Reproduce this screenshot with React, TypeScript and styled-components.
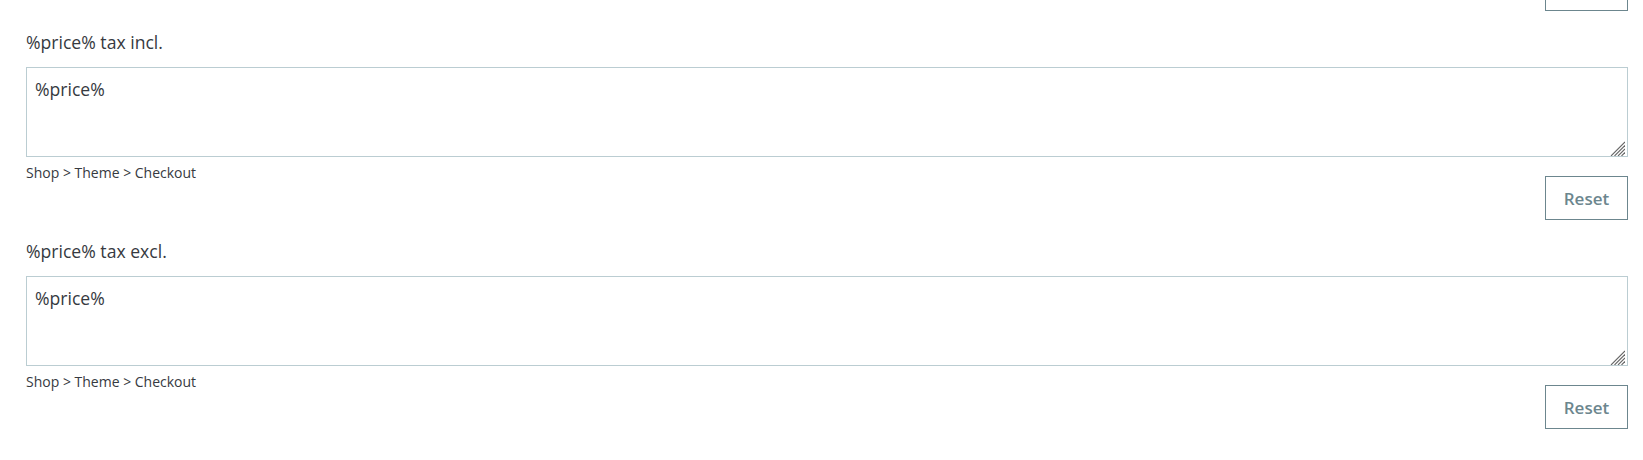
import React, { FC } from "react";
import styled, { createGlobalStyle } from "styled-components";

const GlobalStyle = createGlobalStyle`
  html, body {
    margin: 0;
    padding: 0;
    background: #ffffff;
  }
  body {
    font-family: "Open Sans", "Liberation Sans", sans-serif;
    color: #363a41;
  }
`;

type FieldProps = {
  label: string;
  value: string;
  help: string;
};

const Grip: FC = () => (
  <GripIcon width="15" height="15" viewBox="0 0 15 15" aria-hidden="true">
    <g stroke="#666666" strokeWidth="1.1">
      <line x1="1" y1="15" x2="15" y2="1" />
      <line x1="4.5" y1="15" x2="15" y2="4.5" />
      <line x1="8" y1="15" x2="15" y2="8" />
      <line x1="11.5" y1="15" x2="15" y2="11.5" />
    </g>
  </GripIcon>
);

const Field: FC<FieldProps> = ({ label, value, help }) => {
  return (
    <FormGroup>
      <Label>{label}</Label>
      <AreaWrap>
        <TextArea defaultValue={value} />
        <Grip />
      </AreaWrap>
      <Help>{help}</Help>
      <ButtonRow>
        <ResetButton type="button">Reset</ResetButton>
      </ButtonRow>
    </FormGroup>
  );
};

export default function App() {
  return (
    <>
      <GlobalStyle />
      <Page>
        <ButtonRow cut>
          <ResetButton type="button">Reset</ResetButton>
        </ButtonRow>
        <Field
          label="%price% tax incl."
          value="%price%"
          help="Shop > Theme > Checkout"
        />
        <Field
          label="%price% tax excl."
          value="%price%"
          help="Shop > Theme > Checkout"
        />
      </Page>
    </>
  );
}

const Page = styled.div`
  box-sizing: border-box;
  width: 100%;
  height: 460px;
  overflow: hidden;
  padding: 0 15px 0 26px;
`;

const FormGroup = styled.div`
  display: flex;
  flex-direction: column;
  padding-top: 19px;
`;

const Label = styled.label`
  font-size: 17.6px;
  line-height: 25px;
  color: #363a41;
  margin-bottom: 12px;
`;

const AreaWrap = styled.div`
  position: relative;
  height: 90px;
`;

const TextArea = styled.textarea`
  box-sizing: border-box;
  display: block;
  width: 100%;
  height: 90px;
  margin: 0;
  padding: 9px 8px 6px;
  border: 1px solid #bbcdd2;
  border-radius: 0;
  resize: none;
  font-family: "Open Sans", "Liberation Sans", sans-serif;
  font-size: 17.6px;
  line-height: 25px;
  color: #363a41;
  background: #ffffff;
  outline: none;
`;

const GripIcon = styled.svg`
  position: absolute;
  right: 3px;
  bottom: 1px;
  pointer-events: none;
`;

const Help = styled.div`
  height: 13px;
  padding-top: 6px;
  font-size: 14px;
  line-height: 19px;
  color: #363a41;
  white-space: nowrap;
`;

const ButtonRow = styled.div<{ cut?: boolean }>`
  display: flex;
  justify-content: flex-end;
  margin-top: ${({ cut }) => (cut ? "-33px" : "0")};
`;

const ResetButton = styled.button`
  box-sizing: border-box;
  height: 44px;
  width: 83px;
  padding: 0;
  border: 1px solid #6c868e;
  border-radius: 0;
  background: #ffffff;
  color: #6c868e;
  font-family: "Open Sans", "Liberation Sans", sans-serif;
  font-size: 17px;
  font-weight: 600;
  cursor: pointer;
`;
